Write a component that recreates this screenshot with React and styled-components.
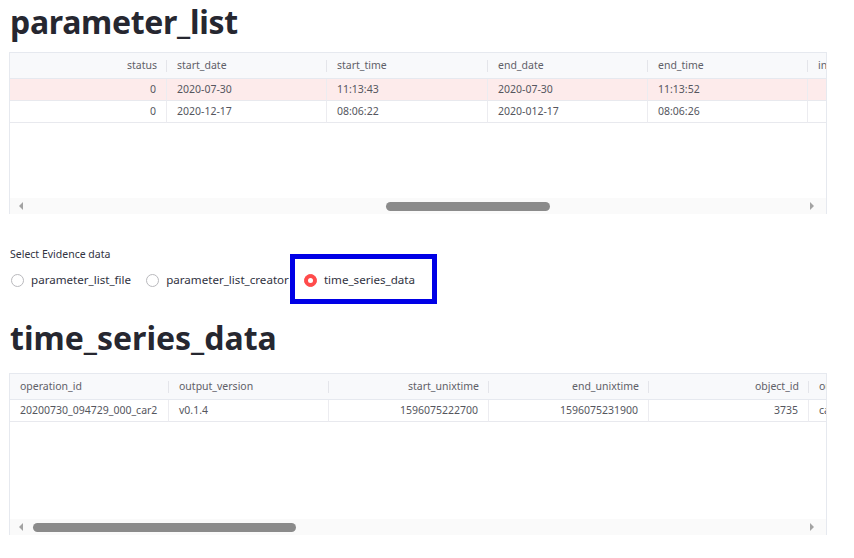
import React from 'react';
import styled, { createGlobalStyle } from 'styled-components';

const GlobalStyle = createGlobalStyle`
  html, body {
    margin: 0;
    padding: 0;
    background: #ffffff;
  }
  body {
    font-family: "Noto Sans", "Open Sans", sans-serif;
    color: #31333f;
  }
`;

const Page = styled.div`
  width: 854px;
  padding: 0 0 0 9px;
  box-sizing: border-box;
`;

const Title = styled.h1`
  margin: ${({ mt }) => mt || 0}px 0 0 0;
  font-family: "Noto Sans", sans-serif;
  font-weight: 700;
  font-size: 32px;
  line-height: ${({ lh }) => lh}px;
  letter-spacing: ${({ ls }) => ls || 0}px;
  color: #262730;
  padding-left: 1px;
  height: ${({ h }) => h}px;
`;

const Frame = styled.div`
  width: 818px;
  height: ${({ h }) => h}px;
  border: 1px solid #e6e9ef;
  border-bottom: none;
  box-sizing: border-box;
  display: flex;
  flex-direction: column;
  overflow: hidden;
`;

const Grid = styled.div`
  flex: 1;
  display: grid;
  grid-template-columns: ${({ cols }) => cols};
  grid-auto-rows: min-content;
  align-content: start;
  overflow: hidden;
`;

const HeadCell = styled.div`
  position: relative;
  height: 25px;
  line-height: 25px;
  background: #f8f9fb;
  border-bottom: 1px solid #e6e9ef;
  font-size: 10.5px;
  color: #5f6068;
  padding: 0 10px;
  white-space: nowrap;
  overflow: hidden;
  text-align: ${({ align }) => align};
  &::after {
    content: '';
    position: absolute;
    right: 0;
    top: 7px;
    height: 12px;
    width: 1px;
    background: #e4e5ea;
  }
`;

const Cell = styled.div`
  height: 21px;
  line-height: 21px;
  background: ${({ hl }) => (hl ? '#fdebeb' : '#ffffff')};
  border-bottom: 1px solid #e8e9ee;
  border-right: 1px solid #ececf0;
  font-size: 10.5px;
  color: #55565e;
  padding: 0 10px;
  white-space: nowrap;
  overflow: hidden;
  text-align: ${({ align }) => align};
`;

const ScrollBar = styled.div`
  height: 16px;
  flex: none;
  background: #fafafa;
  display: flex;
  align-items: center;
`;

const Arrow = styled.div`
  width: 0;
  height: 0;
  border-top: 4px solid transparent;
  border-bottom: 4px solid transparent;
  ${({ dir }) =>
    dir === 'left'
      ? 'border-right: 4px solid #a3a3a3; margin: 0 7px 0 9px;'
      : 'border-left: 4px solid #a3a3a3; margin: 0 12px 0 7px;'}
`;

const Lane = styled.div`
  position: relative;
  flex: 1;
  height: 16px;
`;

const Thumb = styled.div`
  position: absolute;
  top: 4px;
  height: 9px;
  border-radius: 5px;
  background: #8b8b8b;
`;

const Caption = styled.div`
  margin-top: 32px;
  font-size: 10.5px;
  line-height: 16px;
  color: #31333f;
  padding-left: 1px;
`;

const RadioRow = styled.div`
  display: flex;
  align-items: center;
  margin-top: 8px;
  height: 20px;
  padding-left: 2px;
`;

const Option = styled.label`
  position: relative;
  display: flex;
  align-items: center;
  gap: 7px;
  margin-right: ${({ last }) => (last ? 0 : 15)}px;
  font-size: 11.6px;
  line-height: 16px;
  color: #31333f;
  white-space: nowrap;
  &::after {
    content: '';
    display: ${({ boxed }) => (boxed ? 'block' : 'none')};
    position: absolute;
    left: -14px;
    right: -22px;
    top: -18px;
    bottom: -16px;
    border: 5px solid #0000e6;
    pointer-events: none;
  }
`;

const Circle = styled.span`
  width: 13px;
  height: 13px;
  box-sizing: border-box;
  border-radius: 50%;
  flex: none;
  display: flex;
  align-items: center;
  justify-content: center;
  background: ${({ on }) => (on ? '#ff4b4b' : '#ffffff')};
  border: 1px solid ${({ on }) => (on ? '#ff4b4b' : '#b9b9bd')};
  &::after {
    content: '';
    display: ${({ on }) => (on ? 'block' : 'none')};
    width: 5px;
    height: 5px;
    border-radius: 50%;
    background: #ffffff;
  }
`;

function DataFrame({ columns, rows, height, thumb, highlight }) {
  const cols = columns.map((c) => `${c.w}px`).join(' ');
  return (
    <Frame h={height}>
      <Grid cols={cols}>
        {columns.map((c, i) => (
          <HeadCell key={'h' + i} align={c.align}>
            {c.name}
          </HeadCell>
        ))}
        {rows.map((r, ri) =>
          r.map((v, ci) => (
            <Cell key={ri + '-' + ci} align={columns[ci].align} hl={highlight === ri}>
              {v}
            </Cell>
          ))
        )}
      </Grid>
      <ScrollBar>
        <Arrow dir="left" />
        <Lane>
          <Thumb style={{ left: thumb[0], width: thumb[1] }} />
        </Lane>
        <Arrow dir="right" />
      </ScrollBar>
    </Frame>
  );
}

const paramColumns = [
  { name: 'status', w: 157, align: 'right' },
  { name: 'start_date', w: 160, align: 'left' },
  { name: 'start_time', w: 161, align: 'left' },
  { name: 'end_date', w: 160, align: 'left' },
  { name: 'end_time', w: 160, align: 'left' },
  { name: 'in', w: 160, align: 'left' },
];

const paramRows = [
  ['0', '2020-07-30', '11:13:43', '2020-07-30', '11:13:52', ''],
  ['0', '2020-12-17', '08:06:22', '2020-012-17', '08:06:26', ''],
];

const tsColumns = [
  { name: 'operation_id', w: 159, align: 'left' },
  { name: 'output_version', w: 160, align: 'left' },
  { name: 'start_unixtime', w: 160, align: 'right' },
  { name: 'end_unixtime', w: 160, align: 'right' },
  { name: 'object_id', w: 160, align: 'right' },
  { name: 'output_type', w: 160, align: 'left' },
];

const tsRows = [
  ['20200730_094729_000_car2', 'v0.1.4', '1596075222700', '1596075231900', '3735', 'car'],
];

const options = ['parameter_list_file', 'parameter_list_creator', 'time_series_data'];

export default function App() {
  const selected = 2;
  return (
    <>
      <GlobalStyle />
      <Page>
        <Title h={52} lh={44} ls={-0.3}>
          parameter_list
        </Title>
        <DataFrame
          columns={paramColumns}
          rows={paramRows}
          height={162}
          thumb={[356, 164]}
          highlight={0}
        />
        <Caption>Select Evidence data</Caption>
        <RadioRow>
          {options.map((o, i) => (
            <Option key={o} boxed={i === selected} last={i === options.length - 1}>
              <Circle on={i === selected} />
              {o}
            </Option>
          ))}
        </RadioRow>
        <Title h={59} lh={48} mt={24}>
          time_series_data
        </Title>
        <DataFrame columns={tsColumns} rows={tsRows} height={162} thumb={[3, 263]} />
      </Page>
    </>
  );
}
